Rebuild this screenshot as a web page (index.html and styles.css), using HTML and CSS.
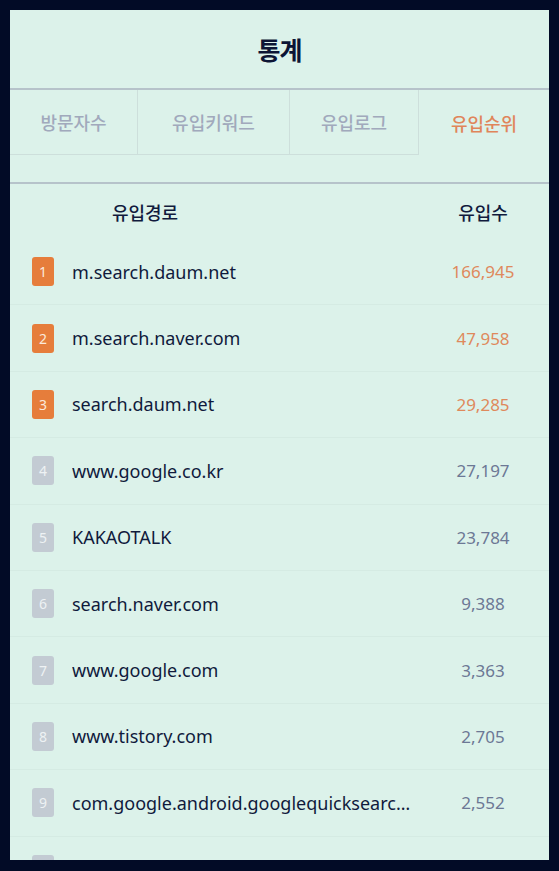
FILE: index.html
```html
<!DOCTYPE html>
<html lang="ko">
<head>
<meta charset="utf-8">
<title>통계</title>
<link rel="stylesheet" href="styles.css">
</head>
<body>
<div class="frame">
  <div class="panel">
    <header class="title-bar"><h1 class="title">통계</h1></header>
    <nav class="tabs">
      <div class="tab t1">방문자수</div>
      <div class="tab t2">유입키워드</div>
      <div class="tab t3">유입로그</div>
      <div class="tab t4 active">유입순위</div>
    </nav>
    <div class="spacer"></div>
    <section class="table">
      <div class="thead">
        <div class="th-src">유입경로</div>
        <div class="th-cnt">유입수</div>
      </div>
      <div class="row top"><span class="badge">1</span><span class="src">m.search.daum.net</span><span class="cnt">166,945</span></div>
      <div class="row top"><span class="badge">2</span><span class="src">m.search.naver.com</span><span class="cnt">47,958</span></div>
      <div class="row top"><span class="badge">3</span><span class="src">search.daum.net</span><span class="cnt">29,285</span></div>
      <div class="row"><span class="badge">4</span><span class="src">www.google.co.kr</span><span class="cnt">27,197</span></div>
      <div class="row"><span class="badge">5</span><span class="src">KAKAOTALK</span><span class="cnt">23,784</span></div>
      <div class="row"><span class="badge">6</span><span class="src">search.naver.com</span><span class="cnt">9,388</span></div>
      <div class="row"><span class="badge">7</span><span class="src">www.google.com</span><span class="cnt">3,363</span></div>
      <div class="row"><span class="badge">8</span><span class="src">www.tistory.com</span><span class="cnt">2,705</span></div>
      <div class="row"><span class="badge">9</span><span class="src">com.google.android.googlequicksearchbox</span><span class="cnt">2,552</span></div>
      <div class="row"><span class="badge"></span></div>
    </section>
  </div>
</div>
</body>
</html>
```
FILE: styles.css
```css
* { box-sizing: border-box; }
html, body {
  margin: 0;
  padding: 0;
  background: #020b26;
  height: 100%;
  overflow: hidden;
}
body {
  font-family: "Noto Sans", "Noto Sans CJK KR", sans-serif;
  color: #111a3d;
}
.frame {
  padding: 10px;
  height: 871px;
}
.panel {
  background: #dcf2ea;
  height: 850px;
  overflow: hidden;
}
.title-bar {
  height: 80px;
  border-bottom: 2px solid #b6c3ca;
  display: flex;
  align-items: center;
  justify-content: center;
}
.title {
  margin: 0;
  font-family: "Noto Sans CJK KR", sans-serif;
  font-size: 25px;
  font-weight: 700;
  color: #0c1535;
  letter-spacing: -1px;
}
.tabs {
  display: grid;
  grid-template-columns: 128px 152px 129px 1fr;
  height: 65px;
}
.tab {
  display: flex;
  align-items: center;
  justify-content: center;
  font-family: "Noto Sans CJK KR", sans-serif;
  font-size: 18px;
  font-weight: 500;
  color: #a1a9bc;
  border-bottom: 1px solid #cddfdb;
  border-right: 1px solid #cddfdb;
}
.tab.active {
  color: #e0855a;
  border-bottom: none;
  border-right: none;
}
.spacer {
  height: 29px;
  border-bottom: 2px solid #b6c3ca;
}
.thead {
  display: flex;
  align-items: center;
  height: 55px;
  padding: 0 21px 0 22px;
}
.th-src {
  width: 226px;
  text-align: center;
  font-family: "Noto Sans CJK KR", sans-serif;
  font-size: 18px;
  font-weight: 500;
  color: #111a3d;
}
.th-cnt {
  margin-left: auto;
  width: 90px;
  text-align: center;
  font-family: "Noto Sans CJK KR", sans-serif;
  font-size: 18px;
  font-weight: 500;
  color: #111a3d;
}
.row {
  display: flex;
  align-items: center;
  height: 66.4px;
  padding: 0 21px 0 22px;
  border-bottom: 1px solid #d5ebe3;
}
.badge {
  flex: none;
  width: 22px;
  height: 29px;
  border-radius: 3px;
  background: #c3cbd3;
  color: #eef2f4;
  font-size: 14px;
  display: flex;
  align-items: center;
  justify-content: center;
}
.row.top .badge {
  background: #e67d3b;
  color: #fbe9dc;
}
.src {
  flex: 1;
  min-width: 0;
  margin-left: 18px;
  font-size: 18px;
  white-space: nowrap;
  overflow: hidden;
  text-overflow: ellipsis;
  color: #101a3c;
  padding-right: 24px;
}
.cnt {
  flex: none;
  width: 90px;
  text-align: center;
  font-size: 17px;
  color: #6c7895;
}
.row.top .cnt {
  color: #df895c;
}
```
